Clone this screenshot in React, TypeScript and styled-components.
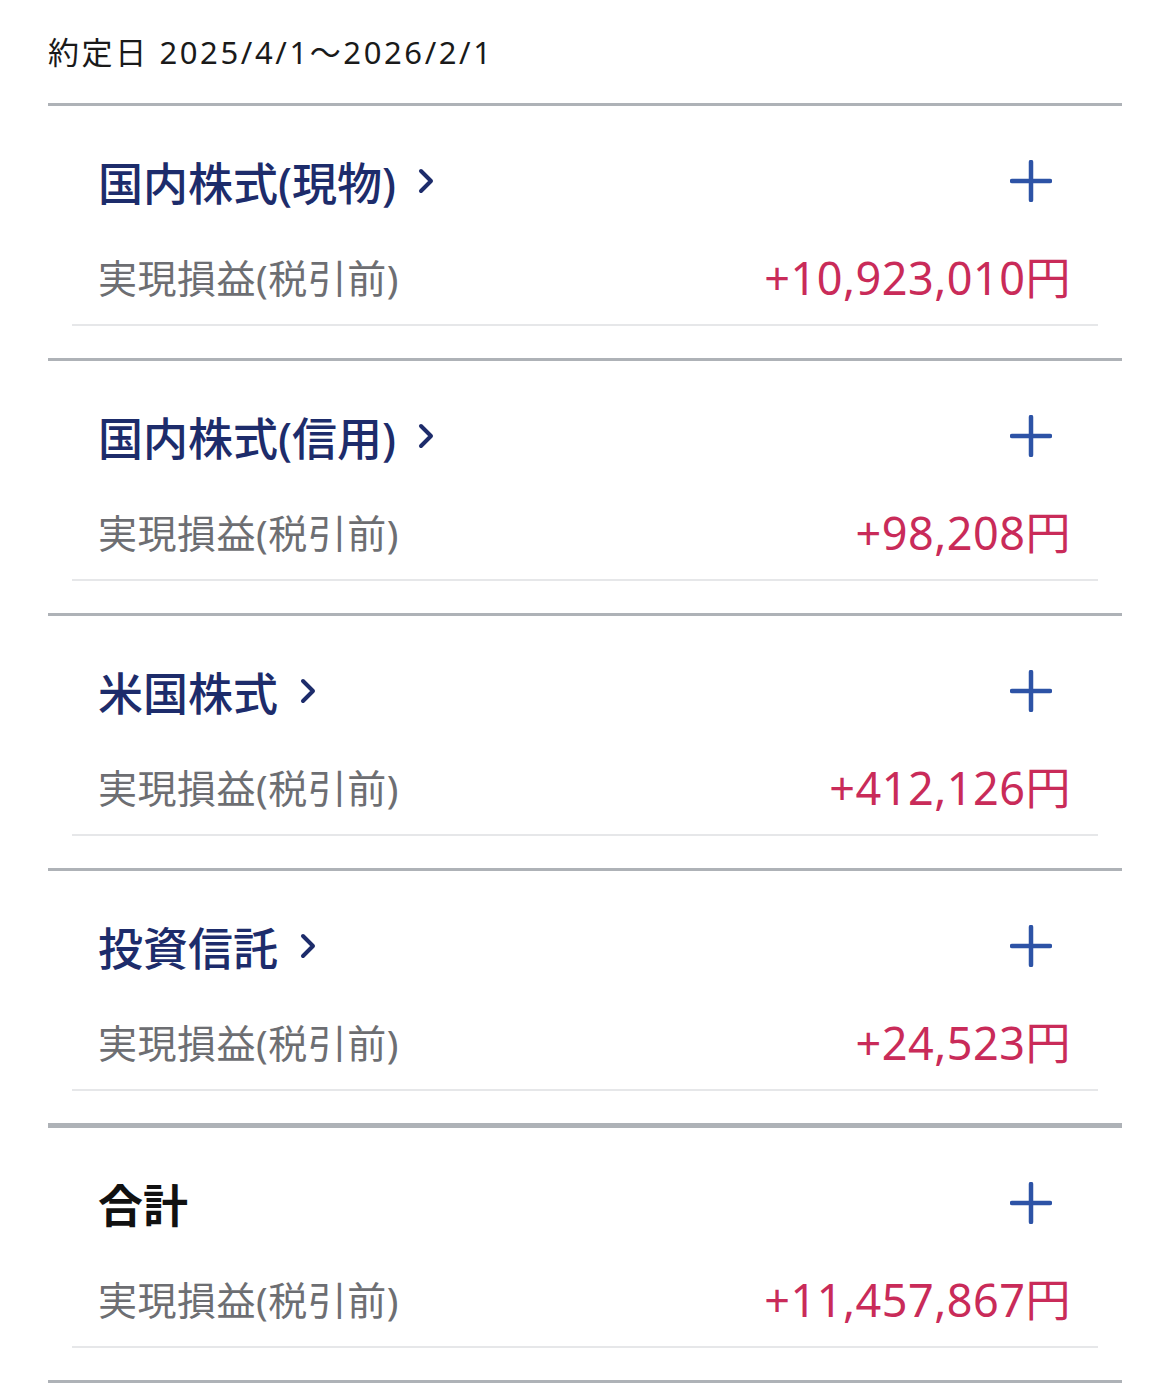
import styled, { createGlobalStyle } from "styled-components";

const GlobalStyle = createGlobalStyle`
    body {
        margin: 0;
        background: #ffffff;
        font-family: "Noto Sans", "Noto Sans CJK JP", sans-serif;
    }
`;

const Page = styled.div`
    width: 1170px;
    padding: 0 48px;
    box-sizing: border-box;
`;

const Period = styled.div`
    padding-top: 30px;
    height: 103px;
    box-sizing: border-box;
    font-size: 31px;
    line-height: 44px;
    letter-spacing: 2.6px;
    color: #1a1a1a;
`;

const Section = styled.section<{ $total?: boolean }>`
    border-top: ${(props) => (props.$total ? "5px" : "3px")} solid #aeb2b7;
    padding: 45px 0 32px;

    &:last-child {
        border-bottom: 3px solid #aeb2b7;
    }
`;

const TitleRow = styled.div`
    display: flex;
    align-items: center;
    justify-content: space-between;
    height: 60px;
    padding: 0 70px 0 50px;
`;

const Title = styled.div<{ $total?: boolean }>`
    display: flex;
    align-items: center;
    gap: 22px;
    font-size: 45px;
    font-weight: ${(props) => (props.$total ? 700 : 500)};
    color: ${(props) => (props.$total ? "#111111" : "#1d2c6b")};
`;

const ProfitRow = styled.div`
    display: flex;
    align-items: center;
    justify-content: space-between;
    margin: 0 24px;
    padding: 44px 27px 23px 26px;
    border-bottom: 2px solid #e6e7e9;
    line-height: 46px;
`;

const Label = styled.span`
    font-size: 39px;
    letter-spacing: 0.5px;
    color: #6d6e72;
`;

const Amount = styled.span`
    font-size: 45px;
    letter-spacing: 0.5px;
    color: #c92b59;
`;

function Chevron() {
    return (
        <svg width="16" height="26" viewBox="0 0 16 26">
            <path d="M3 3 L13 13 L3 23" fill="none" stroke="#1d2c6b" strokeWidth="4" strokeLinecap="round" strokeLinejoin="round" />
        </svg>
    );
}

function Plus() {
    return (
        <svg width="42" height="42" viewBox="0 0 42 42">
            <path d="M21 2 V40 M2 21 H40" fill="none" stroke="#2d53a6" strokeWidth="4.5" strokeLinecap="round" />
        </svg>
    );
}

const items = [
    { name: "国内株式(現物)", amount: "+10,923,010円" },
    { name: "国内株式(信用)", amount: "+98,208円" },
    { name: "米国株式", amount: "+412,126円" },
    { name: "投資信託", amount: "+24,523円" },
];

function App() {
    return (
        <Page>
            <GlobalStyle />
            <Period>約定日 2025/4/1〜2026/2/1</Period>
            {items.map((item) => (
                <Section key={item.name}>
                    <TitleRow>
                        <Title>
                            {item.name}
                            <Chevron />
                        </Title>
                        <Plus />
                    </TitleRow>
                    <ProfitRow>
                        <Label>実現損益(税引前)</Label>
                        <Amount>{item.amount}</Amount>
                    </ProfitRow>
                </Section>
            ))}
            <Section $total>
                <TitleRow>
                    <Title $total>合計</Title>
                    <Plus />
                </TitleRow>
                <ProfitRow>
                    <Label>実現損益(税引前)</Label>
                    <Amount>+11,457,867円</Amount>
                </ProfitRow>
            </Section>
        </Page>
    );
}

export default App;
